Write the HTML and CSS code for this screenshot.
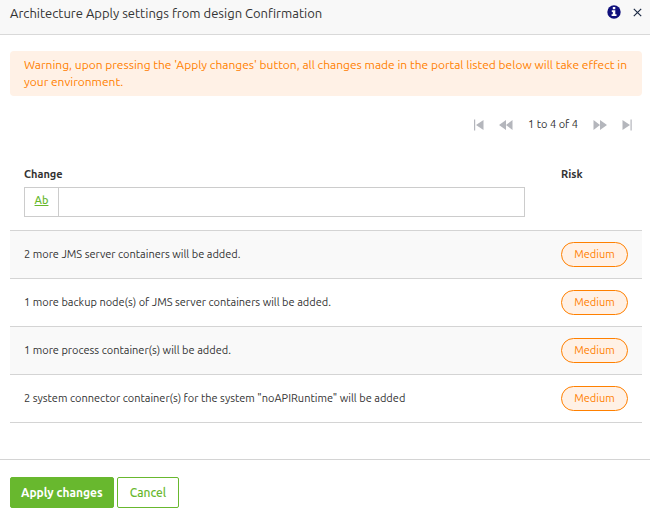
FILE: index.html
```html
<!DOCTYPE html>
<html lang="en">
<head>
    <meta charset="UTF-8">
    <meta name="viewport" content="width=device-width, initial-scale=1.0">
    <title>Architecture Apply settings from design Confirmation</title>
    <link rel="stylesheet" href="styles.css">
</head>
<body>
    <header class="dialog-header">
        <h1 class="dialog-title">Architecture Apply settings from design Confirmation</h1>
        <div class="dialog-tools">
            <button class="icon-button" type="button" aria-label="Information">
                <svg width="14" height="14" viewBox="0 0 14 14">
                    <circle cx="7" cy="7" r="6.7" fill="#10107c"/>
                    <path d="M5.800 2h2.500v2.200H5.800zM4.800 5.200h3.500v4h1.200v1.800H4.600V9.200h1.200V7h-1z" fill="#fff"/>
                </svg>
            </button>
            <button class="icon-button" type="button" aria-label="Close">
                <svg width="9" height="9" viewBox="0 0 9 9">
                    <path d="M.8 .8l7.400 7.400M8.200 .8L.8 8.200" stroke="#1d2b45" stroke-width="1.200"/>
                </svg>
            </button>
        </div>
    </header>

    <main class="dialog-body">
        <p class="warning">Warning, upon pressing the 'Apply changes' button, all changes made in the portal listed below will take effect in your environment.</p>

        <nav class="pager" aria-label="Pages">
            <button class="icon-button" type="button" aria-label="First page">
                <svg width="10" height="12" viewBox="0 0 10 12">
                    <path d="M0 .5h1.200v11H0zM9.500 1v10L2 6z" fill="#b4b6bc"/>
                </svg>
            </button>
            <button class="icon-button" type="button" aria-label="Previous page">
                <svg width="14" height="12" viewBox="0 0 14 12">
                    <path d="M7 1v10L0 6zM13.500 1v10L7 6z" fill="#b4b6bc"/>
                </svg>
            </button>
            <span class="pager-text">1 to 4 of 4</span>
            <button class="icon-button" type="button" aria-label="Next page">
                <svg width="14" height="12" viewBox="0 0 14 12">
                    <path d="M.5 1v10L7 6zM7 1v10l7-5z" fill="#b4b6bc"/>
                </svg>
            </button>
            <button class="icon-button" type="button" aria-label="Last page">
                <svg width="10" height="12" viewBox="0 0 10 12">
                    <path d="M.5 1v10L8 6zM8.500 .5h1.200v11H8.500z" fill="#b4b6bc"/>
                </svg>
            </button>
        </nav>

        <table class="changes">
            <thead>
                <tr>
                    <th class="change-column">
                        <label for="change-filter">Change</label>
                        <div class="filter">
                            <button class="filter-mode" type="button">Ab</button>
                            <input class="filter-input" id="change-filter" type="text">
                        </div>
                    </th>
                    <th class="risk-column">Risk</th>
                </tr>
            </thead>
            <tbody>
                <tr>
                    <td>2 more JMS server containers will be added.</td>
                    <td><span class="risk">Medium</span></td>
                </tr>
                <tr>
                    <td>1 more backup node(s) of JMS server containers will be added.</td>
                    <td><span class="risk">Medium</span></td>
                </tr>
                <tr>
                    <td>1 more process container(s) will be added.</td>
                    <td><span class="risk">Medium</span></td>
                </tr>
                <tr>
                    <td>2 system connector container(s) for the system "noAPIRuntime" will be added</td>
                    <td><span class="risk">Medium</span></td>
                </tr>
            </tbody>
        </table>
    </main>

    <footer class="dialog-footer">
        <button class="btn btn-primary" type="button">Apply changes</button>
        <button class="btn" type="button">Cancel</button>
    </footer>
</body>
</html>
```
FILE: styles.css
```css
* {
    box-sizing: border-box;
}

body {
    margin: 0;
    background: #fff;
    color: #333;
    font-family: Ubuntu, "Noto Sans", sans-serif;
    font-size: 11px;
    line-height: 17px;
}

button,
input {
    font: inherit;
}

.dialog-header {
    display: flex;
    align-items: flex-start;
    justify-content: space-between;
    height: 35px;
    padding: 5px 8px 0 10px;
    background: #f8f8f8;
    border-bottom: 1px solid #d9d9d9;
}

.dialog-title {
    margin: 0;
    font-size: 13px;
    font-weight: normal;
}

.dialog-tools {
    display: flex;
    align-items: center;
    gap: 12px;
}

.icon-button {
    display: flex;
    padding: 0;
    border: none;
    background: transparent;
    cursor: pointer;
}

.dialog-body {
    padding: 16px 8px 36px 10px;
}

.warning {
    margin: 0;
    padding: 5px 14px 6px;
    background: #fff1e6;
    border-radius: 4px;
    color: #ff8000;
    font-size: 12px;
}

.pager {
    display: flex;
    align-items: center;
    justify-content: flex-end;
    gap: 15px;
    height: 17px;
    margin: 20px 10px 33px 0;
}

.changes {
    width: 100%;
    border-collapse: collapse;
}

.changes th {
    padding: 0 14px 13px;
    font-weight: 600;
    text-align: left;
    vertical-align: top;
}

.changes .change-column {
    padding-right: 22px;
}

.risk-column {
    width: 94px;
}

.filter {
    display: flex;
    height: 30px;
    margin-top: 4px;
    border: 1px solid #ccc;
}

.filter-mode {
    width: 34px;
    padding: 0 0 4px;
    border: none;
    border-right: 1px solid #ccc;
    background: transparent;
    color: #68b82e;
    font-weight: 500;
    text-decoration: underline;
    cursor: pointer;
}

.filter-input {
    flex: 1;
    min-width: 0;
    padding: 0 8px;
    border: none;
}

.changes td {
    height: 48px;
    padding: 0 14px;
    border-top: 1px solid #d4d4d4;
    border-bottom: 1px solid #d4d4d4;
}

.changes tbody tr:nth-child(odd) {
    background: #f9f9f9;
}

.risk {
    display: inline-block;
    width: 67px;
    padding: 3px 0;
    border: 1px solid #ff8000;
    border-radius: 13px;
    background: #fff1e6;
    color: #ff8000;
    text-align: center;
}

.dialog-footer {
    display: flex;
    gap: 3px;
    padding: 17px 10px 7px;
    border-top: 1px solid #d4d4d4;
}

.btn {
    height: 31px;
    padding: 0 12px;
    border: 1px solid #68b82e;
    border-radius: 2px;
    background: #fff;
    color: #68b82e;
    font-size: 12px;
    font-weight: 500;
    cursor: pointer;
}

.btn-primary {
    padding: 0 10px;
    background: #68b82e;
    color: #fff;
    font-weight: bold;
}
```
